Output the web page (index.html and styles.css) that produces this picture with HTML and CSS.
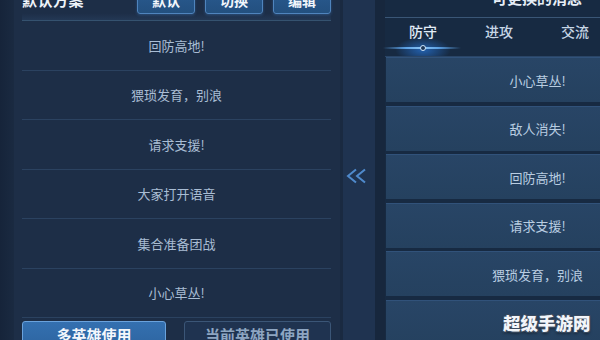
FILE: index.html
```html
<!DOCTYPE html>
<html lang="zh-CN">
<head>
<meta charset="utf-8">
<link rel="stylesheet" href="styles.css">
</head>
<body>
<div class="screen">
  <div class="edge"></div>
  <section class="left">
    <header class="lhead">
      <span class="ltitle">默认方案</span>
      <div class="btns">
        <button class="tbtn">默认</button>
        <button class="tbtn">切换</button>
        <button class="tbtn">编辑</button>
      </div>
    </header>
    <ul class="llist">
      <li>回防高地!</li>
      <li>猥琐发育，别浪</li>
      <li>请求支援!</li>
      <li>大家打开语音</li>
      <li>集合准备团战</li>
      <li>小心草丛!</li>
    </ul>
    <div class="lfoot">
      <button class="fbtn primary">多英雄使用</button>
      <button class="fbtn secondary">当前英雄已使用</button>
    </div>
  </section>
  <div class="mid">
    <div class="midinner">
      <svg class="arrow" width="26" height="16" viewBox="0 0 26 16">
        <path d="M12 1.5 L4 8 L12 14.5 M21 1.5 L13 8 L21 14.5" fill="none" stroke="#4f8acc" stroke-width="2" stroke-linejoin="miter"/>
      </svg>
    </div>
    <div class="midedge"></div>
  </div>
  <section class="right">
    <div class="rhead">可更换的消息</div>
    <nav class="tabs">
      <div class="tab active">防守<span class="ind"><span class="glow"></span><span class="bar"></span><span class="dot"></span></span></div>
      <div class="tab">进攻</div>
      <div class="tab">交流</div>
      <div class="tab"></div>
    </nav>
    <ul class="rlist">
      <li>小心草丛!</li>
      <li>敌人消失!</li>
      <li>回防高地!</li>
      <li>请求支援!</li>
      <li>猥琐发育，别浪</li>
      <li></li>
    </ul>
  </section>
  <div class="watermark">超级手游网</div>
</div>
</body>
</html>
```

FILE: styles.css
```css
* { box-sizing: border-box; }
html, body { margin: 0; padding: 0; }
body {
  width: 600px;
  height: 340px;
  overflow: hidden;
  background: #1b2b42;
  font-family: "Noto Sans CJK SC", "Noto Sans", sans-serif;
}
.screen {
  position: relative;
  display: flex;
  width: 600px;
  height: 340px;
  overflow: hidden;
  background: #1c2c44;
}
.edge {
  width: 14px;
  flex-shrink: 0;
  background: linear-gradient(90deg, #16243a, #1a2a41);
}
.left {
  width: 326px;
  flex-shrink: 0;
  padding: 0 9px 0 8px;
  display: flex;
  flex-direction: column;
  background: #1d2e47;
}
.lhead {
  flex-shrink: 0;
  margin-top: -14px;
  height: 35px;
  display: flex;
  align-items: flex-start;
  justify-content: space-between;
  border-bottom: 1px solid #35526f;
  background: linear-gradient(180deg, rgba(0,0,0,0) 80%, rgba(70,110,160,0.15));
}
.ltitle {
  color: #eef3f9;
  font-size: 15px;
  font-weight: 700;
  line-height: 28px;
  letter-spacing: 0.5px;
}
.btns {
  display: flex;
  gap: 10px;
}
.tbtn {
  width: 58px;
  height: 28px;
  border: 1px solid #4f84bd;
  border-radius: 3px;
  background: linear-gradient(180deg, #2a5b92, #23507f);
  color: #f1f6fc;
  font-family: inherit;
  font-size: 14px;
  font-weight: 700;
  line-height: 26px;
  padding: 0;
  box-shadow: 0 1px 3px rgba(70,140,220,0.35);
}
.llist {
  flex-shrink: 0;
  list-style: none;
  margin: 0;
  padding: 0;
}
.llist li {
  height: 49.5px;
  display: flex;
  align-items: center;
  justify-content: center;
  color: #a9bdd4;
  font-size: 13px;
  border-bottom: 1px solid #2b4260;
}
.lfoot {
  flex-shrink: 0;
  margin-top: 3px;
  display: flex;
  justify-content: space-between;
}
.fbtn {
  height: 28px;
  padding: 0;
  border-radius: 3px;
  font-family: inherit;
  font-size: 15px;
  font-weight: 700;
  line-height: 26px;
}
.primary {
  width: 144px;
  background: linear-gradient(180deg, #3470b0, #2d64a0);
  border: 1px solid #6aa2dc;
  color: #f3f7fc;
}
.secondary {
  width: 147px;
  background: #1f3350;
  border: 1px solid #3b5677;
  color: #8ea6c2;
}
.mid {
  width: 45px;
  flex-shrink: 0;
  display: flex;
  background: #1a2a41;
}
.midinner {
  width: 32px;
  margin-left: 3px;
  display: flex;
  align-items: center;
  justify-content: center;
  background: #1f3350;
}
.arrow {
  display: block;
  margin-top: 12px;
  margin-left: -4px;
}
.midedge {
  width: 10px;
  background: #17273d;
}
.right {
  width: 304px;
  flex-shrink: 0;
  display: flex;
  flex-direction: column;
  background: #172a42;
}
.rhead {
  flex-shrink: 0;
  margin-top: -12px;
  height: 30px;
  text-align: center;
  color: #e6eef7;
  font-size: 15px;
  font-weight: 700;
  line-height: 20px;
  border-bottom: 1px solid #3a5676;
}
.tabs {
  flex-shrink: 0;
  height: 39px;
  display: flex;
  border-bottom: 1px solid #2a4566;
}
.tab {
  position: relative;
  flex: 1;
  text-align: center;
  padding-top: 5px;
  font-size: 14px;
  line-height: 16px;
  color: #c7d6e6;
  font-weight: 500;
}
.tab.active { color: #e2edf8; }
.ind {
  position: absolute;
  left: 0;
  right: 0;
  top: 18px;
  height: 20px;
}
.glow {
  position: absolute;
  left: 8px;
  right: 8px;
  top: 0;
  height: 20px;
  background: radial-gradient(ellipse at 50% 70%, rgba(40,120,220,0.7), rgba(40,120,220,0) 65%);
}
.bar {
  position: absolute;
  left: -2px;
  right: 0;
  top: 11px;
  height: 2px;
  background: linear-gradient(90deg, rgba(90,160,230,0), #5ea3e6 30%, #8cc4f4 50%, #5ea3e6 70%, rgba(90,160,230,0));
}
.dot {
  position: absolute;
  left: 35px;
  top: 9px;
  width: 6px;
  height: 6px;
  border-radius: 50%;
  background: #1c3656;
  border: 1.5px solid #cfe6fb;
}
.rlist {
  flex-shrink: 0;
  list-style: none;
  margin: 0;
  padding: 0;
}
.rlist li {
  height: 45px;
  margin-bottom: 3.5px;
  margin-left: 1px;
  display: flex;
  align-items: center;
  justify-content: center;
  font-size: 13px;
  color: #b9cde1;
  background: linear-gradient(180deg, #284566, #25415f);
  border-top: 1px solid #31527a;
}
.watermark {
  position: absolute;
  left: 503px;
  top: 310px;
  font-size: 17.5px;
  font-weight: 900;
  color: #f2f5fa;
  text-shadow: 1px 1px 0 #3a4a5e, -1px 1px 0 #3a4a5e, 1px -1px 0 #3a4a5e, -1px -1px 0 #3a4a5e, 0 2px 3px rgba(0,0,0,0.5);
}
```
